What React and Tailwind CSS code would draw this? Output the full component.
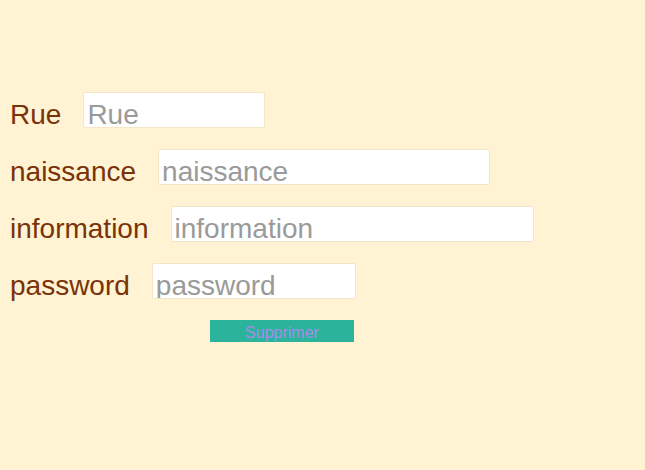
export default function App() {
  const champs = [
    { nom: 'Rue', largeur: 'w-[182px]' },
    { nom: 'naissance', largeur: 'w-[332px]' },
    { nom: 'information', largeur: 'w-[363px]' },
    { nom: 'password', largeur: 'w-[204px]' },
  ];

  return (
    <div className="min-h-[470px] bg-[#fff3d3] pt-[92px] font-['Liberation_Sans',Arial,sans-serif]">
      <div className="flex flex-col gap-[21px]">
        {champs.map((c) => (
          <div key={c.nom} className="flex items-baseline pl-[10px]">
            <label className="text-[28px] leading-[24px] text-[#7a3208] mr-[22px]">{c.nom}</label>
            <input
              type="text"
              placeholder={c.nom}
              className={`${c.largeur} h-[36px] bg-white border border-[#f3e6c8] rounded-[2px] px-[3px] pt-[10px] pb-0 text-[28px] leading-[24px] placeholder:text-[#9a9a9a] outline-none`}
            />
          </div>
        ))}
      </div>
      <button className="ml-[210px] mt-[21px] w-[144px] h-[22px] bg-[#2bb39b] text-[#a98be8] text-[16px] leading-[22px] pt-[2px]">
        Supprimer
      </button>
    </div>
  );
}
